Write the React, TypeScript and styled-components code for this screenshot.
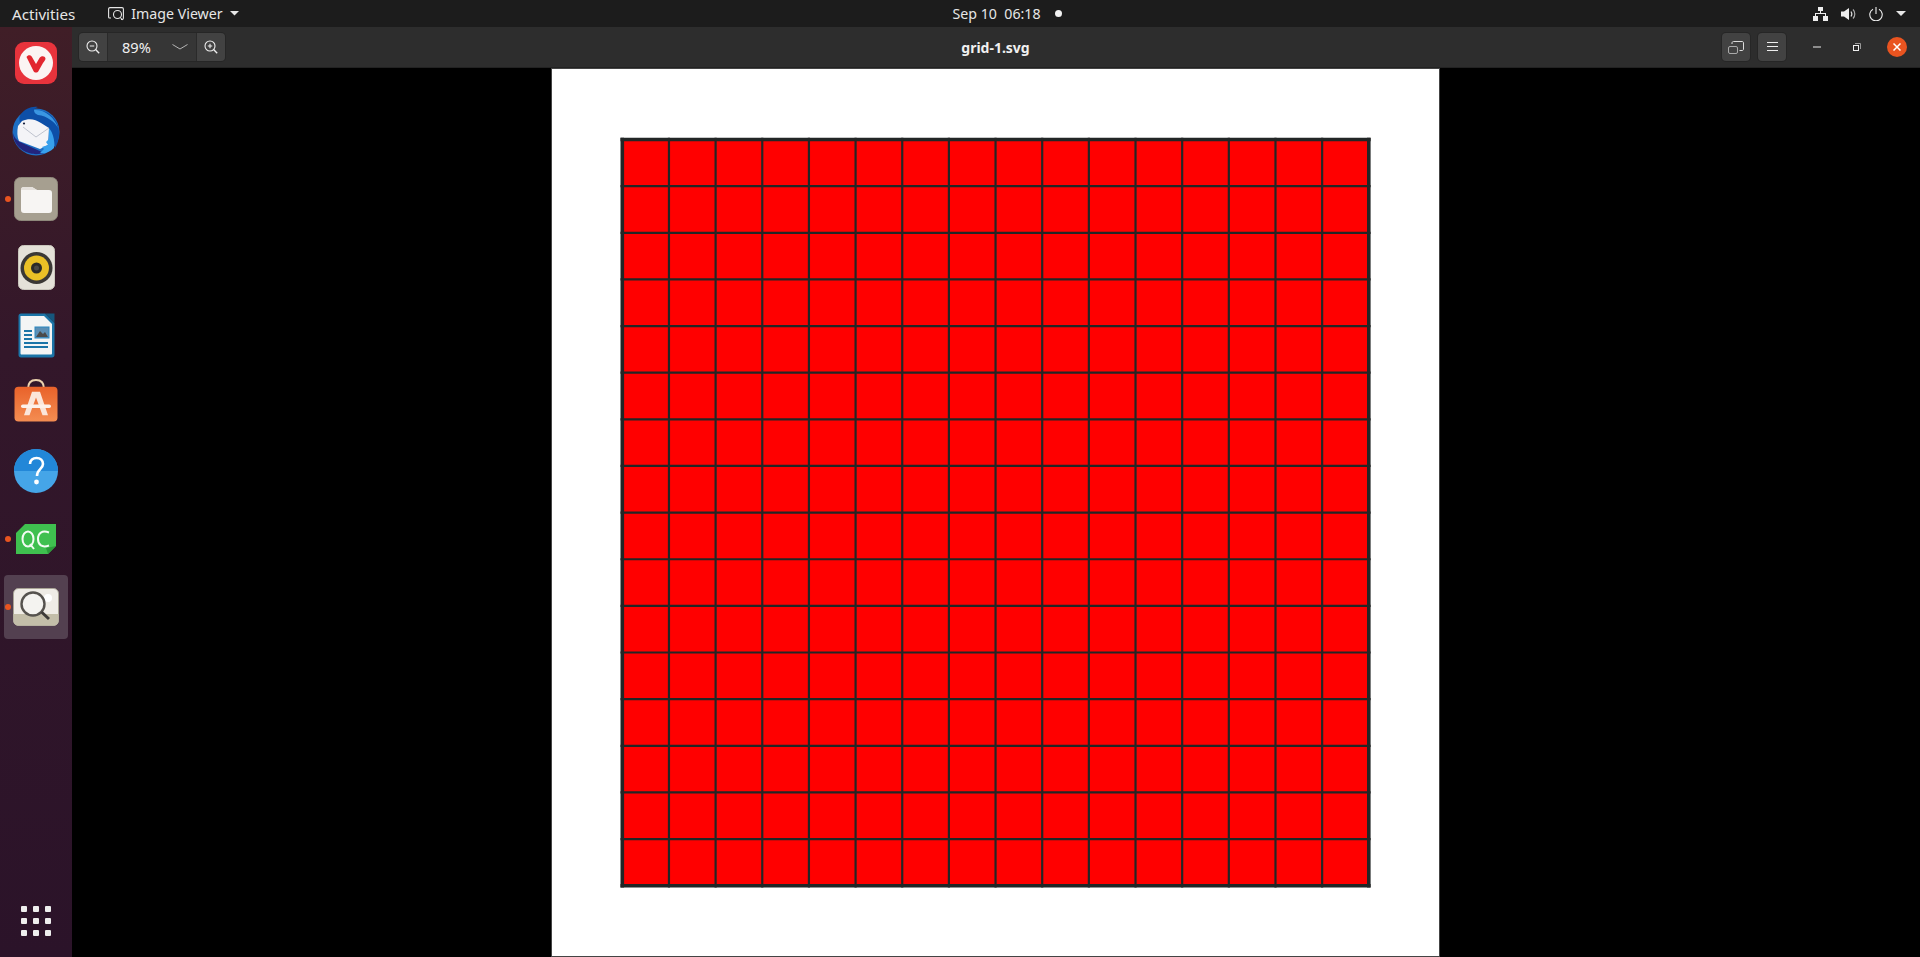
import * as React from 'react';
import styled, { createGlobalStyle } from 'styled-components';

const GlobalStyle = createGlobalStyle`
  html, body {
    margin: 0;
    padding: 0;
    height: 100%;
    background: #000;
    overflow: hidden;
  }
  #root {
    height: 100%;
  }
`;

const uiFont = `'Noto Sans', 'Open Sans', sans-serif`;

const Screen = styled.div`
  display: grid;
  grid-template-rows: 27px 1fr;
  width: 1920px;
  height: 957px;
  font-family: ${uiFont};
`;

const TopBar = styled.header`
  display: grid;
  grid-template-columns: 1fr auto 1fr;
  align-items: center;
  background: #1c1c1c;
  color: #e6e6e6;
  font-size: 14.2px;
`;

const TopLeft = styled.div`
  display: flex;
  align-items: center;
  padding-left: 12px;
`;

const ActivitiesLabel = styled.span`
  font-size: 15.2px;
`;

const AppMenu = styled.div`
  display: flex;
  align-items: center;
  gap: 7px;
  margin-left: 33px;
`;

const Clock = styled.div`
  display: flex;
  align-items: center;
  margin-left: 94px;
`;

const ClockDot = styled.span`
  width: 7px;
  height: 7px;
  margin-left: 14px;
  border-radius: 50%;
  background: #f2f2f2;
`;

const TopRight = styled.div`
  display: flex;
  align-items: center;
  justify-content: flex-end;
  gap: 13px;
  padding-right: 14px;
`;

const Body = styled.div`
  display: grid;
  grid-template-columns: 72px 1fr;
  min-height: 0;
`;

const Dock = styled.nav`
  display: flex;
  flex-direction: column;
  align-items: center;
  padding: 4px 0 2px;
  background: linear-gradient(180deg, #401e27 0%, #33172a 35%, #2b1329 100%);
`;

const DockItem = styled.div<{ $active?: boolean }>`
  position: relative;
  display: flex;
  align-items: center;
  justify-content: center;
  width: 64px;
  height: 64px;
  margin-bottom: 4px;
  border-radius: 4px;
  background: ${(p) => (p.$active ? '#534050' : 'transparent')};
`;

const RunDot = styled.span`
  position: absolute;
  left: 1px;
  top: 29px;
  width: 6px;
  height: 6px;
  border-radius: 50%;
  background: #e95420;
`;

const AppsButton = styled.div`
  display: grid;
  grid-template-columns: repeat(3, 6px);
  gap: 6px;
  margin-top: auto;
  margin-bottom: 19px;
`;

const AppsDot = styled.span`
  width: 6px;
  height: 6px;
  border-radius: 1px;
  background: #eeeeee;
`;

const Viewer = styled.main`
  display: grid;
  grid-template-rows: 41px 1fr;
  min-width: 0;
  min-height: 0;
`;

const TitleBar = styled.div`
  display: grid;
  grid-template-columns: 1fr auto 1fr;
  align-items: center;
  padding: 0 0 0 7px;
  background: #2d2d2d;
  border-bottom: 1px solid #222;
  box-sizing: border-box;
  color: #f0f0f0;
`;

const ZoomGroup = styled.div`
  display: flex;
  width: 146px;
  height: 28px;
  border-radius: 4px;
  overflow: hidden;
  box-shadow: 0 0 0 1px #262626;
`;

const ZoomButton = styled.div`
  display: flex;
  align-items: center;
  justify-content: center;
  width: 28px;
  background: #424242;
`;

const ZoomValue = styled.div`
  display: flex;
  flex: 1;
  align-items: center;
  justify-content: space-between;
  padding: 0 8px 0 14px;
  background: #363636;
  font-size: 14.6px;
  border-left: 1px solid #2a2a2a;
  border-right: 1px solid #2a2a2a;
`;

const Title = styled.div`
  margin-right: 8px;
  font-size: 14px;
  font-weight: 700;
`;

const TitleActions = styled.div`
  display: flex;
  align-items: center;
  justify-content: flex-end;
`;

const ToolGroup = styled.div`
  display: flex;
  margin-right: 3px;
`;

const ToolButton = styled.div`
  display: flex;
  align-items: center;
  justify-content: center;
  width: 28px;
  height: 28px;
  margin-right: 8px;
  border-radius: 4px;
  background: #424242;
  box-shadow: 0 0 0 1px #262626;
`;

const WindowButton = styled.div`
  display: flex;
  align-items: center;
  justify-content: center;
  width: 40px;
  height: 28px;
`;

const CloseButton = styled.div`
  display: flex;
  align-items: center;
  justify-content: center;
  width: 20px;
  height: 20px;
  margin: 0 13px 0 10px;
  border-radius: 50%;
  background: #e95420;
`;

const Canvas = styled.div`
  display: flex;
  justify-content: center;
  padding-right: 1px;
  min-height: 0;
  overflow: hidden;
  background: #000;
`;

const Page = styled.svg`
  display: block;
  flex-shrink: 0;
  width: 889px;
  height: 889px;
`;

const SoftwareSvg = styled.svg`
  margin-bottom: 6px;
`;

const GRID_SIZE = 16;
const GRID_X = 71.3;
const GRID_Y = 71.5;
const GRID_W = 746.5;
const GRID_H = 746.2;

const GridDrawing = () => {
  const lines = Array.from({ length: GRID_SIZE + 1 }, (_, i) => i);
  return (
    <Page viewBox="0 0 889 889">
      <rect x="0.5" y="0.5" width="888" height="888" fill="#fff" stroke="#444" />
      <rect x={GRID_X} y={GRID_Y} width={GRID_W} height={GRID_H} fill="#f00" />
      {lines.map((i) => {
        const edge = i === 0 || i === GRID_SIZE;
        const x = GRID_X + (GRID_W / GRID_SIZE) * i;
        const y = GRID_Y + (GRID_H / GRID_SIZE) * i;
        return (
          <g key={i} stroke="#222626" strokeWidth={edge ? 3.6 : 2.2}>
            <line x1={x} y1={GRID_Y - 1.8} x2={x} y2={GRID_Y + GRID_H + 1.8} />
            <line x1={GRID_X - 1.8} y1={y} x2={GRID_X + GRID_W + 1.8} y2={y} />
          </g>
        );
      })}
    </Page>
  );
};

const VivaldiIcon = () => (
  <svg width="44" height="44" viewBox="0 0 44 44">
    <rect x="1" y="1" width="42" height="42" rx="9" fill="#e8333c" />
    <circle cx="22" cy="22" r="17" fill="#fbf4f3" />
    <path d="M12.5 16 C14 13.5 17 14 18 16 L22 23 L25.5 17 C27 14.5 31 14.5 31.5 17.5 C31.5 19 30 20.5 29 22 L24.5 30 C23.5 32 20.5 32 19.5 30 Z" fill="#e2262f" />
  </svg>
);

const ThunderbirdIcon = () => (
  <svg width="50" height="50" viewBox="0 0 50 50">
    <circle cx="25" cy="26" r="23.5" fill="#1d6fc4" />
    <path d="M10 8 C14 3 20 0 27 1 C24 2 23 3 23 4 C34 3 44 10 47 20 C49 27 48 36 44 42 C44 32 39 23 30 18 C23 13 15 13 9 17 C8 13 8 11 10 8Z" fill="#0d4fa8" />
    <path d="M23 4 C33 3 44 11 47 22 C44 16 36 10 27 9 C24 8 23 6 23 4Z" fill="#3a96e2" />
    <path d="M2 27 C2 36 8 44 18 47 C24 49 29 48 33 47 L9 36 C5 34 3 31 2 27Z" fill="#22247c" />
    <path d="M7 20 L11 15 C18 12 24 13 30 17 L38 22 L37 39 L29 43 L8 35 C6 31 6 25 7 20Z" fill="#f4f4f7" />
    <path d="M12 21 L25 31 L38 22" fill="none" stroke="#bfc3ce" strokeWidth="1" />
    <path d="M38 22 C42 27 44 34 43 42 C39 46 34 48 29 47 L33 43 L31 41 L37 39 L35 36 L38 33Z" fill="#38a0ec" />
    <circle cx="13" cy="17.5" r="1.1" fill="#1a2340" />
  </svg>
);

const FilesIcon = () => (
  <svg width="44" height="44" viewBox="0 0 44 44">
    <rect x="0.5" y="0.5" width="43" height="43" rx="6" fill="#a69f90" stroke="#8e887b" />
    <path d="M7 13 C7 11 8 10 10 10 L18 10 L23 13 L35 13 C37 13 38 14 38 16 L38 33 C38 35 37 36 35 36 L10 36 C8 36 7 35 7 33 Z" fill="#f7f5f3" />
    <path d="M7 13 L19 13 L23 13 L18 10 L10 10 C8 10 7 11 7 13Z" fill="#e5e1dc" />
  </svg>
);

const RhythmboxIcon = () => (
  <svg width="37" height="45" viewBox="0 0 37 45">
    <rect x="0.5" y="0.5" width="36" height="44" rx="5" fill="#e4e1d8" stroke="#c9c6bc" />
    <circle cx="18.5" cy="23" r="16" fill="#3a3835" />
    <circle cx="18.5" cy="23" r="12.5" fill="#eac026" />
    <circle cx="18.5" cy="23" r="5.5" fill="#2b2a28" />
    <circle cx="18.5" cy="23" r="2.5" fill="#4a4946" />
  </svg>
);

const WriterIcon = () => (
  <svg width="37" height="45" viewBox="0 0 37 45">
    <path d="M3 0.5 L27 0.5 L36.5 10 L36.5 42 C36.5 43.5 35.5 44.5 34 44.5 L3 44.5 C1.5 44.5 0.5 43.5 0.5 42 L0.5 3 C0.5 1.5 1.5 0.5 3 0.5Z" fill="#1b75a8" />
    <path d="M3 3 L26 3 L34 11 L34 40 C34 41 33.5 41.5 33 41.5 L3.5 41.5 C3 41.5 2.5 41 2.5 40 L2.5 3.5Z" fill="#f4f5f5" />
    <path d="M27 0.5 L36.5 0.5 L36.5 10Z" fill="#16577d" />
    <rect x="6" y="17" width="8" height="2" fill="#1b75a8" />
    <rect x="6" y="21" width="8" height="2" fill="#1b75a8" />
    <rect x="6" y="25" width="8" height="2" fill="#1b75a8" />
    <rect x="6" y="29" width="24" height="2" fill="#1b75a8" />
    <rect x="6" y="33" width="24" height="2" fill="#1b75a8" />
    <rect x="17" y="14" width="14" height="11" fill="#5c8fb5" stroke="#2b87c0" />
    <path d="M18 24 L22 18 L25 21 L27 19 L30 24Z" fill="#4a4a4a" />
  </svg>
);

const SoftwareIcon = () => (
  <SoftwareSvg width="44" height="43" viewBox="0 0 44 44" preserveAspectRatio="none">
    <defs>
      <linearGradient id="bagFill" x1="0" y1="0" x2="0" y2="1">
        <stop offset="0" stopColor="#e9622a" />
        <stop offset="1" stopColor="#f48d52" />
      </linearGradient>
    </defs>
    <path d="M14 10 C14 3 17 1 22 1 C27 1 30 3 30 10" fill="none" stroke="#ecd3ae" strokeWidth="2" />
    <rect x="0.5" y="8" width="43" height="35.5" rx="4" fill="url(#bagFill)" />
    <path d="M18 13 H26 L34 37 H28.5 L22 19 L15.5 37 H10Z" fill="#fbe6da" />
    <rect x="7" y="26" width="30" height="3.6" rx="1.8" fill="#fdf1ea" />
  </SoftwareSvg>
);

const HelpIcon = () => (
  <svg width="44" height="44" viewBox="0 0 44 44">
    <circle cx="22" cy="22" r="22" fill="#45a5e8" />
    <path d="M0 22 A22 22 0 0 1 44 22Z" fill="#2287d8" />
    <path d="M16 15 C16 11 19 9 22.5 9 C26.5 9 29 11.5 29 15 C29 20 23 20 23 27" fill="none" stroke="#fff" strokeWidth="2.6" />
    <circle cx="22.5" cy="33" r="2.4" fill="#fff" />
  </svg>
);

const QtCreatorIcon = () => (
  <svg width="40" height="30" viewBox="0 0 40 30">
    <path d="M9 0 L40 0 L40 22 L32 30 L0 30 L0 9Z" fill="#3fc04f" />
    <path d="M40 22 L32 30 L30 24 Z" fill="#2c9c3b" />
    <ellipse cx="12" cy="15" rx="5.5" ry="7.5" fill="none" stroke="#f3fbf3" strokeWidth="2" />
    <path d="M14 20 L18 25" stroke="#f3fbf3" strokeWidth="2" />
    <path d="M33 8.5 C26 6 22 9 22 15 C22 21 26 24 33 21.5" fill="none" stroke="#f3fbf3" strokeWidth="2" />
  </svg>
);

const ImageViewerIcon = () => (
  <svg width="46" height="38" viewBox="0 0 46 38">
    <rect x="0.5" y="0.5" width="45" height="37" rx="5" fill="#efece6" stroke="#a9a596" />
    <path d="M0.5 26 L45.5 26 L45.5 32.5 C45.5 35.5 43.5 37.5 40.5 37.5 L5.5 37.5 C2.5 37.5 0.5 35.5 0.5 32.5Z" fill="#c3bea9" />
    <circle cx="35" cy="10" r="4" fill="#fff" />
    <circle cx="20" cy="16" r="11.5" fill="#f7f6f3" fillOpacity="0.7" stroke="#55524e" strokeWidth="2.4" />
    <path d="M28.5 24 L36 31" stroke="#3d3b38" strokeWidth="3" />
  </svg>
);

const AppMenuGlyph = () => (
  <svg width="16" height="14" viewBox="0 0 16 14" fill="none" stroke="#e6e6e6" strokeWidth="1.1">
    <path d="M3 11 L1.5 11 C1 11 .6 10.6 .6 10 L.6 2 C.6 1.2 1.2 .6 2 .6 L14 .6 C14.8 .6 15.4 1.2 15.4 2 L15.4 11 C15.4 12 14.8 12.5 14 12.5 L13 12.5" />
    <circle cx="9.5" cy="7.5" r="4" />
    <path d="M12.3 10.5 L14.5 13" />
  </svg>
);

const CaretDown = ({ width }: { width: number }) => (
  <svg width={width} height={width / 2} viewBox="0 0 10 5">
    <path d="M0 0 L10 0 L5 5Z" fill="#e6e6e6" />
  </svg>
);

const NetworkGlyph = () => (
  <svg width="15" height="14" viewBox="0 0 15 14" fill="#eee">
    <rect x="5" y="0" width="5" height="4" />
    <rect x="0" y="9" width="5" height="5" />
    <rect x="10" y="9" width="5" height="5" />
    <path d="M7 4 H8 V6 H13 V9 H12 V7 H3 V9 H2 V6 H7Z" />
  </svg>
);

const VolumeGlyph = () => (
  <svg width="15" height="14" viewBox="0 0 15 14" fill="none">
    <path d="M0 4.5 H3 L8 1 V13 L3 9.5 H0Z" fill="#eee" />
    <path d="M10 4.5 C11 6 11 8 10 9.5" stroke="#ddd" strokeWidth="1.2" />
    <path d="M12 2.5 C14.4 5 14.4 9 12 11.5" stroke="#aaa" strokeWidth="1.2" />
  </svg>
);

const PowerGlyph = () => (
  <svg width="14" height="14" viewBox="0 0 14 14" fill="none" stroke="#eee" strokeWidth="1.1">
    <path d="M4 2.2 A6.2 6.2 0 1 0 10 2.2" />
    <path d="M7 0 V7" />
  </svg>
);

const ZoomGlyph = ({ plus }: { plus?: boolean }) => (
  <svg width="14" height="14" viewBox="0 0 14 14" fill="none" stroke="#eee" strokeWidth="1.1">
    <circle cx="6" cy="6" r="5" />
    <path d="M9.6 9.6 L13.2 13.2" strokeWidth="1.4" />
    <path d="M3.8 6 H8.2" />
    {plus && <path d="M6 3.8 V8.2" />}
  </svg>
);

const Chevron = () => (
  <svg width="16" height="6" viewBox="0 0 16 6" fill="none" stroke="#b5b5b5" strokeWidth="1">
    <path d="M0.5 0.5 L8 5 L15.5 0.5" />
  </svg>
);

const SwitchGlyph = () => (
  <svg width="16" height="13" viewBox="0 0 16 13" fill="none" stroke="#dcdcdc" strokeWidth="1">
    <path d="M4 3 V2 C4 1 4.8 .5 5.5 .5 L14 .5 C15 .5 15.5 1 15.5 2 L15.5 8 C15.5 9 15 9.5 14 9.5 L11.5 9.5" />
    <rect x="0.5" y="5.5" width="9" height="7" rx="1.5" stroke="#aaa" />
  </svg>
);

const MenuGlyph = () => (
  <svg width="11" height="10" viewBox="0 0 11 10" stroke="#eee" strokeWidth="1">
    <path d="M0 .5 H11 M0 4.5 H11 M0 8.5 H11" />
  </svg>
);

const MinimizeGlyph = () => (
  <svg width="8" height="2" viewBox="0 0 8 2">
    <rect width="8" height="1" y="0.5" fill="#eee" />
  </svg>
);

const RestoreGlyph = () => (
  <svg width="8" height="8" viewBox="0 0 8 8" fill="none">
    <path d="M2 0.5 H7.5 V6" stroke="#999" />
    <rect x="0.5" y="2.5" width="5" height="5" stroke="#eee" />
  </svg>
);

const CloseGlyph = () => (
  <svg width="8" height="8" viewBox="0 0 8 8" stroke="#fff" strokeWidth="1.5">
    <path d="M0.5 0.5 L7.5 7.5 M7.5 0.5 L0.5 7.5" />
  </svg>
);

const dockApps = [
  { key: 'vivaldi', icon: <VivaldiIcon /> },
  { key: 'thunderbird', icon: <ThunderbirdIcon /> },
  { key: 'files', icon: <FilesIcon />, running: true },
  { key: 'rhythmbox', icon: <RhythmboxIcon /> },
  { key: 'writer', icon: <WriterIcon /> },
  { key: 'software', icon: <SoftwareIcon /> },
  { key: 'help', icon: <HelpIcon /> },
  { key: 'qtcreator', icon: <QtCreatorIcon />, running: true },
  { key: 'viewer', icon: <ImageViewerIcon />, running: true, active: true },
];

export default function App() {
  return (
    <Screen>
      <GlobalStyle />
      <TopBar>
        <TopLeft>
          <ActivitiesLabel>Activities</ActivitiesLabel>
          <AppMenu>
            <AppMenuGlyph />
            <span>Image Viewer</span>
            <CaretDown width={9} />
          </AppMenu>
        </TopLeft>
        <Clock>
          <span>Sep 10&nbsp;&nbsp;06:18</span>
          <ClockDot />
        </Clock>
        <TopRight>
          <NetworkGlyph />
          <VolumeGlyph />
          <PowerGlyph />
          <CaretDown width={10} />
        </TopRight>
      </TopBar>
      <Body>
        <Dock>
          {dockApps.map((app) => (
            <DockItem key={app.key} $active={app.active}>
              {app.running && <RunDot />}
              {app.icon}
            </DockItem>
          ))}
          <AppsButton>
            {Array.from({ length: 9 }, (_, i) => (
              <AppsDot key={i} />
            ))}
          </AppsButton>
        </Dock>
        <Viewer>
          <TitleBar>
            <ZoomGroup>
              <ZoomButton>
                <ZoomGlyph />
              </ZoomButton>
              <ZoomValue>
                <span>89%</span>
                <Chevron />
              </ZoomValue>
              <ZoomButton>
                <ZoomGlyph plus />
              </ZoomButton>
            </ZoomGroup>
            <Title>grid-1.svg</Title>
            <TitleActions>
              <ToolGroup>
                <ToolButton>
                  <SwitchGlyph />
                </ToolButton>
                <ToolButton>
                  <MenuGlyph />
                </ToolButton>
              </ToolGroup>
              <WindowButton>
                <MinimizeGlyph />
              </WindowButton>
              <WindowButton>
                <RestoreGlyph />
              </WindowButton>
              <CloseButton>
                <CloseGlyph />
              </CloseButton>
            </TitleActions>
          </TitleBar>
          <Canvas>
            <GridDrawing />
          </Canvas>
        </Viewer>
      </Body>
    </Screen>
  );
}
